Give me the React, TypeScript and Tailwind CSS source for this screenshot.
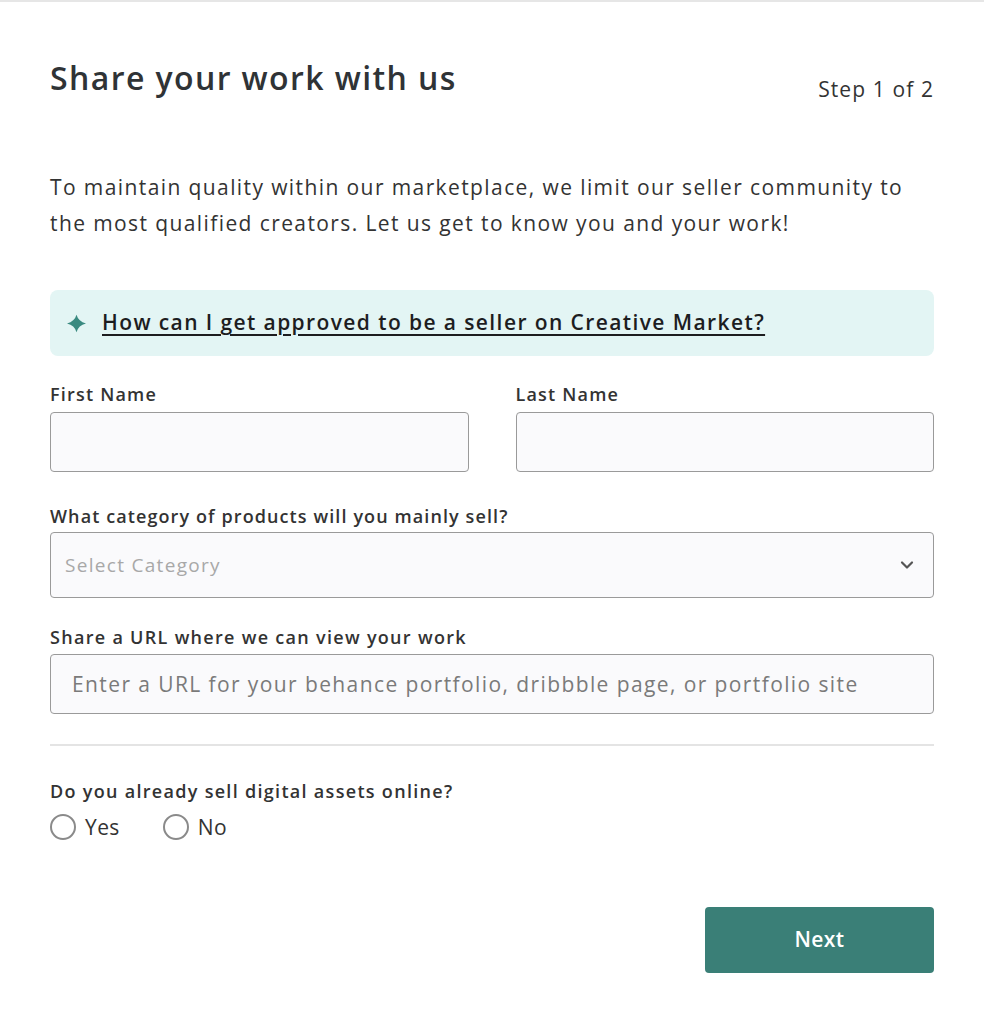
import React from 'react';

const Sparkle: React.FC = () => (
  <svg width="21" height="19" viewBox="0 0 24 22" className="shrink-0">
    <path d="M12 1 Q14.2 8.8 23 11 Q14.2 13.2 12 21 Q9.8 13.2 1 11 Q9.8 8.8 12 1 Z" fill="#3a8a80" />
  </svg>
);

const Chevron: React.FC = () => (
  <svg width="16" height="16" viewBox="0 0 16 16" fill="none">
    <path d="M3 5.5 L8 10.5 L13 5.5" stroke="#555" strokeWidth="2.2" strokeLinecap="round" strokeLinejoin="round" />
  </svg>
);

const Radio: React.FC<{ label: string }> = ({ label }) => (
  <label className="flex items-center gap-[9px] cursor-pointer">
    <span className="w-[26px] h-[26px] rounded-full border-2 border-[#8a8a8a] bg-white" />
    <span className="text-[21px] leading-[26px] tracking-[0.4px] text-[#333]">{label}</span>
  </label>
);

export default function App() {
  return (
    <div className="min-h-screen bg-white border-t-2 border-[#e6e6e6] font-['Open_Sans',sans-serif] text-[#2f3336]">
      <div className="px-[50px] pt-[52px]">
        {/* Header */}
        <div className="flex items-start justify-between">
          <h1 className="text-[32px] font-semibold tracking-[1.4px] text-[#2f3336] leading-[48px]">
            Share your work with us
          </h1>
          <span className="text-[21px] tracking-[1.1px] text-[#333] leading-[28px] mt-[21px]">Step 1 of 2</span>
        </div>

        <p className="mt-[66px] text-[21px] leading-[36px] tracking-[1.4px] text-[#333]">
          To maintain quality within our marketplace, we limit our seller community to
          <br />
          the most qualified creators. Let us get to know you and your work!
        </p>

        {/* Info banner */}
        <div className="mt-[49px] h-[66px] rounded-lg bg-[#e3f5f4] flex items-center gap-[15px] pl-[16px] pr-[16px]">
          <Sparkle />
          <a href="#" className="text-[21px] font-semibold tracking-[1.4px] text-[#1d1d1f] underline underline-offset-4 decoration-[1.5px]">
            How can I get approved to be a seller on Creative Market?
          </a>
        </div>

        {/* Names */}
        <div className="mt-[27px] grid grid-cols-2 gap-[47px]">
          <div>
            <label className="block text-[18px] font-semibold tracking-[1.2px] text-[#333] leading-[22px]">First Name</label>
            <input className="mt-[7px] w-full h-[60px] rounded border border-[#9a9a9a] bg-[#fafafc] px-4 outline-none" />
          </div>
          <div>
            <label className="block text-[18px] font-semibold tracking-[1.2px] text-[#333] leading-[22px]">Last Name</label>
            <input className="mt-[7px] w-full h-[60px] rounded border border-[#9a9a9a] bg-[#fafafc] px-4 outline-none" />
          </div>
        </div>

        {/* Category */}
        <div className="mt-[33px]">
          <label className="block text-[18px] font-semibold tracking-[1.1px] text-[#333] leading-[22px]">
            What category of products will you mainly sell?
          </label>
          <div className="mt-[5px] h-[66px] rounded border border-[#9a9a9a] bg-[#fafafc] flex items-center justify-between pl-[14px] pr-[18px]">
            <span className="text-[19px] tracking-[1.3px] text-[#a8a8a8]">Select Category</span>
            <Chevron />
          </div>
        </div>

        {/* URL */}
        <div className="mt-[28px]">
          <label className="block text-[18px] font-semibold tracking-[1.3px] text-[#333] leading-[22px]">
            Share a URL where we can view your work
          </label>
          <input
            className="mt-[6px] w-full h-[60px] rounded border border-[#9a9a9a] bg-[#fafafc] px-[21px] text-[21px] tracking-[1.4px] placeholder:text-[#7a7a7a] outline-none"
            placeholder="Enter a URL for your behance portfolio, dribbble page, or portfolio site"
          />
        </div>

        <hr className="mt-[30px] border-t-2 border-[#e4e4e4]" />

        {/* Radio */}
        <div className="mt-[33px]">
          <p className="text-[18px] font-semibold tracking-[1.3px] text-[#333] leading-[24px]">Do you already sell digital assets online?</p>
          <div className="mt-[11px] flex items-center gap-[43px]">
            <Radio label="Yes" />
            <Radio label="No" />
          </div>
        </div>

        <div className="mt-[67px] flex justify-end">
          <button className="w-[229px] h-[66px] rounded bg-[#3a7f77] text-white text-[21px] font-semibold tracking-[0.4px]">
            Next
          </button>
        </div>
      </div>
    </div>
  );
}
